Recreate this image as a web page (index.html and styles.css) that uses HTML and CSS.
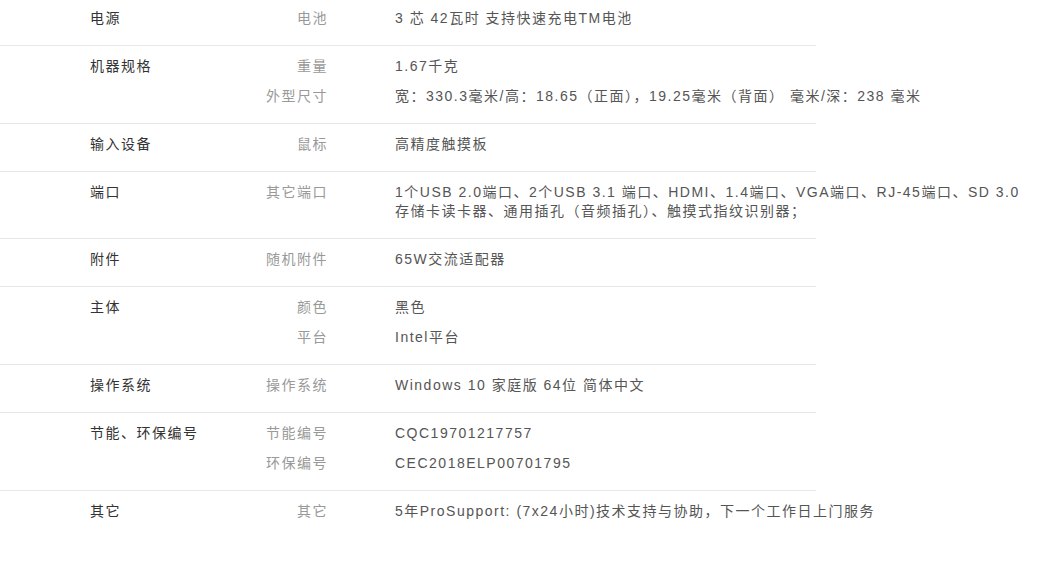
FILE: index.html
```html
<!DOCTYPE html>
<html lang="zh-CN">
<head>
    <meta charset="UTF-8">
    <meta name="viewport" content="width=device-width, initial-scale=1.0">
    <title>规格参数</title>
    <link rel="stylesheet" href="styles.css">
</head>
<body>

    <div class="specs">
        <div class="spec-row">
            <div class="spec-name">电源</div>
            <dl class="spec-items">
                <div class="spec-item"><dt>电池</dt><dd>3 芯 42瓦时 支持快速充电TM电池</dd></div>
            </dl>
        </div>
        <div class="spec-row">
            <div class="spec-name">机器规格</div>
            <dl class="spec-items">
                <div class="spec-item"><dt>重量</dt><dd>1.67千克</dd></div>
                <div class="spec-item"><dt>外型尺寸</dt><dd>宽：330.3毫米/高：18.65（正面），19.25毫米（背面） 毫米/深：238 毫米</dd></div>
            </dl>
        </div>
        <div class="spec-row">
            <div class="spec-name">输入设备</div>
            <dl class="spec-items">
                <div class="spec-item"><dt>鼠标</dt><dd>高精度触摸板</dd></div>
            </dl>
        </div>
        <div class="spec-row">
            <div class="spec-name">端口</div>
            <dl class="spec-items">
                <div class="spec-item"><dt>其它端口</dt><dd>1个USB 2.0端口、2个USB 3.1 端口、HDMI、1.4端口、VGA端口、RJ-45端口、SD 3.0 存储卡读卡器、通用插孔（音频插孔）、触摸式指纹识别器；</dd></div>
            </dl>
        </div>
        <div class="spec-row">
            <div class="spec-name">附件</div>
            <dl class="spec-items">
                <div class="spec-item"><dt>随机附件</dt><dd>65W交流适配器</dd></div>
            </dl>
        </div>
        <div class="spec-row">
            <div class="spec-name">主体</div>
            <dl class="spec-items">
                <div class="spec-item"><dt>颜色</dt><dd>黑色</dd></div>
                <div class="spec-item"><dt>平台</dt><dd>Intel平台</dd></div>
            </dl>
        </div>
        <div class="spec-row">
            <div class="spec-name">操作系统</div>
            <dl class="spec-items">
                <div class="spec-item"><dt>操作系统</dt><dd>Windows 10 家庭版 64位 简体中文</dd></div>
            </dl>
        </div>
        <div class="spec-row">
            <div class="spec-name">节能、环保编号</div>
            <dl class="spec-items">
                <div class="spec-item"><dt>节能编号</dt><dd>CQC19701217757</dd></div>
                <div class="spec-item"><dt>环保编号</dt><dd>CEC2018ELP00701795</dd></div>
            </dl>
        </div>
        <div class="spec-row last">
            <div class="spec-name">其它</div>
            <dl class="spec-items">
                <div class="spec-item"><dt>其它</dt><dd>5年ProSupport: (7x24小时)技术支持与协助，下一个工作日上门服务</dd></div>
            </dl>
        </div>
    </div>

</body>
</html>
```

FILE: styles.css
```css
body {
    margin: 0;
    padding: 0;
    background-color: #fff;
    font-family: "Liberation Sans", Arial, "Noto Sans CJK SC", sans-serif;
    font-size: 14px;
    letter-spacing: 1.5px;
}

.specs {
    width: 816px;
    margin-top: -2px;
}

.spec-row {
    display: flex;
    padding: 11px 0 6px;
    border-bottom: 1px solid #e8e8e8;
    line-height: 19px;
}

.spec-row.last {
    border-bottom: none;
}

.spec-name {
    flex-shrink: 0;
    width: 160px;
    padding-left: 90px;
    color: #333;
    white-space: nowrap;
}

.spec-items {
    margin: 0;
    display: flex;
    flex-direction: column;
}

.spec-item {
    display: flex;
    margin-bottom: 11px;
}

.spec-item dt {
    flex-shrink: 0;
    width: 78px;
    text-align: right;
    color: #999;
    white-space: nowrap;
}

.spec-item dd {
    flex-shrink: 0;
    margin: 0 0 0 67px;
    width: 630px;
    color: #555;
}
```
